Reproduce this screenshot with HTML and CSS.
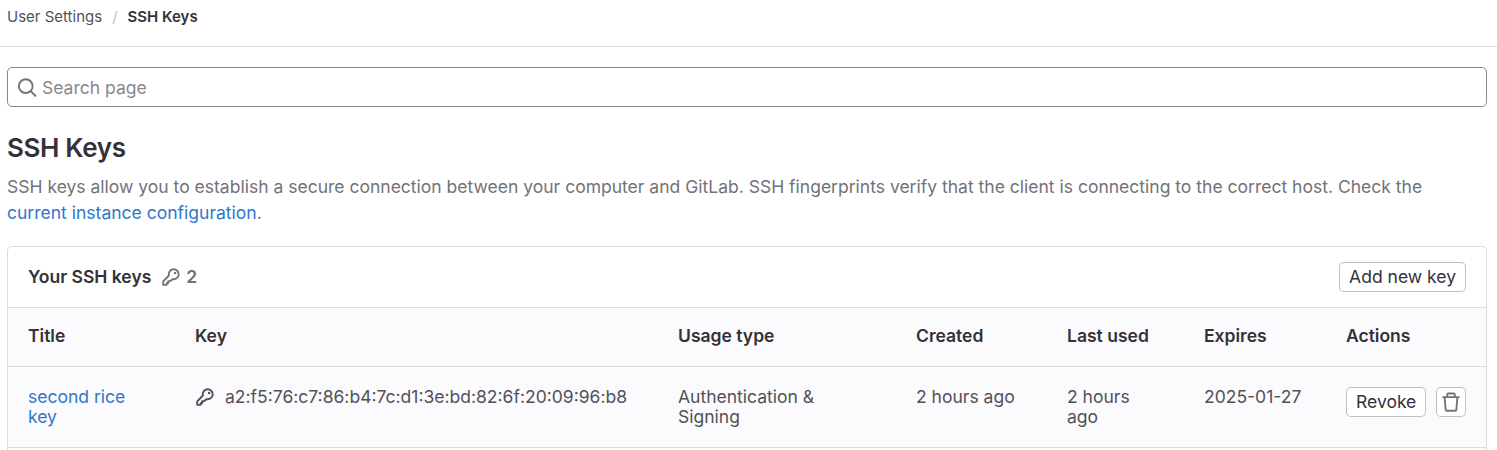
FILE: index.html
```html
<!DOCTYPE html>
<html lang="en">
<head>
<meta charset="utf-8">
<title>SSH Keys</title>
<link rel="stylesheet" href="styles.css">
</head>
<body>
<svg class="defs" aria-hidden="true">
  <symbol id="key" viewBox="0 0 16 16"><path fill="none" stroke="currentColor" stroke-width="1.5" stroke-linejoin="round" d="M6.300 6.800A4 4 0 1 1 9.200 9.700L7.500 11.250H5.750V13H4.500v1.250H1.750V11.500Z"/><circle cx="11.250" cy="4.750" r="1"/></symbol>
</svg>
<nav class="breadcrumbs"><a>User Settings</a><span class="slash">/</span><strong>SSH Keys</strong></nav>
<main class="content">
  <div class="search">
    <svg class="icon search-icon" viewBox="0 0 16 16"><circle cx="7" cy="6.500" r="5.500"/><path d="M11 10.500l3.700 3.700"/></svg>
    <span>Search page</span>
  </div>
  <h1>SSH Keys</h1>
  <div class="intro">SSH keys allow you to establish a secure connection between your computer and GitLab. SSH fingerprints verify that the client is connecting to the correct host. Check the <div><a>current instance configuration</a>.</div></div>
  <section class="card">
    <header class="card-header">
      <h2>Your SSH keys</h2>
      <svg class="icon count-icon"><use href="#key"/></svg>
      <span class="count">2</span>
      <button class="button">Add new key</button>
    </header>
    <div class="row head"><span>Title</span><span>Key</span><span>Usage type</span><span>Created</span><span>Last used</span><span>Expires</span><span>Actions</span></div>
    <div class="row">
      <a>second rice key</a>
      <span class="fingerprint"><svg class="icon"><use href="#key"/></svg>a2:f5:76:c7:86:b4:7c:d1:3e:bd:82:6f:20:09:96:b8</span>
      <span>Authentication &amp;<br>Signing</span>
      <span>2 hours ago</span>
      <span>2 hours<br>ago</span>
      <span>2025-01-27</span>
      <span class="actions"><button class="button">Revoke</button><button class="button trash" aria-label="Remove"><svg class="icon" viewBox="0 0 16 16"><path d="M1.100 4.100h13.800M5 4V1.900a.7.7 0 0 1 .7-.7h4.600a.7.700 0 0 1 .7.700V4M2.900 4.300l.8 9.800a1 1 0 0 0 1 .9h6.600a1 1 0 0 0 1-.9l.8-9.800"/></svg></button></span>
    </div>
    <div class="row-end"></div>
  </section>
</main>
</body>
</html>
```
FILE: styles.css
```css
* { box-sizing: border-box; }
body { margin: 0; height: 450px; overflow: hidden; background: #fff; color: #333238; font: 17.52px/20px Inter, sans-serif; }
.defs { position: absolute; width: 0; height: 0; }
a { color: #2f77cc; }
.icon { width: 20px; height: 20px; fill: currentColor; flex: none; }
.breadcrumbs { height: 47px; padding: 7px 7px 0; border-bottom: 1px solid #dcdcde; font-size: 15px; display: flex; }
.breadcrumbs a { color: #535158; }
.slash { margin: 0 10px; color: #bfbfc3; }
.breadcrumbs strong { font-weight: 600; }
.content { padding: 20px 10px 0 7px; }
.search { height: 40px; border: 1px solid #89888d; border-radius: 5px; display: flex; align-items: center; gap: 5px; padding: 1px 9px 0; color: #89888d; }
.search-icon { fill: none; stroke: #737278; stroke-width: 1.500; stroke-linecap: round; }
h1 { margin: 25px 0 0; font-size: 26px; line-height: 32px; font-weight: 600; letter-spacing: -0.35px; }
.intro { margin: 10px 0 0; line-height: 26px; color: #737278; }
.card { margin-top: 20px; border: 1px solid #dcdcde; border-bottom: 0; border-radius: 5px 5px 0 0; overflow: hidden; }
.card-header { height: 60px; padding: 0 20px; display: flex; align-items: center; }
h2 { margin: 0; font-size: 17.52px; line-height: 20px; font-weight: 600; }
.count-icon { margin: 0 5px 0 10px; color: #737278; }
.count { color: #737278; font-weight: 600; }
.button { height: 30px; padding: 0 10px; border: 0; border-radius: 5px; box-shadow: inset 0 0 0 1px #bfbfc3; background: #fff; color: #333238; font: inherit; white-space: nowrap; }
.card-header .button { margin-left: auto; }
.row { display: grid; grid-template-columns: 167px 483px 238px 151px 137px 142px 1fr; padding: 20px 20px 0; height: 81px; background: #fbfafd; border-top: 1px solid #dcdcde; color: #535158; }
.row.head { height: 59px; padding-top: 18px; font-weight: 600; color: #333238; }
.row > a { width: 120px; }
.row-end { height: 3px; border-top: 1px solid #dcdcde; background: #fbfafd; }
.fingerprint { display: flex; gap: 10px; align-items: flex-start; }
.actions { display: flex; gap: 10px; }
.trash { width: 30px; padding: 5px; }
.trash .icon { display: block; fill: none; stroke: #737278; stroke-width: 1.500; }
```
